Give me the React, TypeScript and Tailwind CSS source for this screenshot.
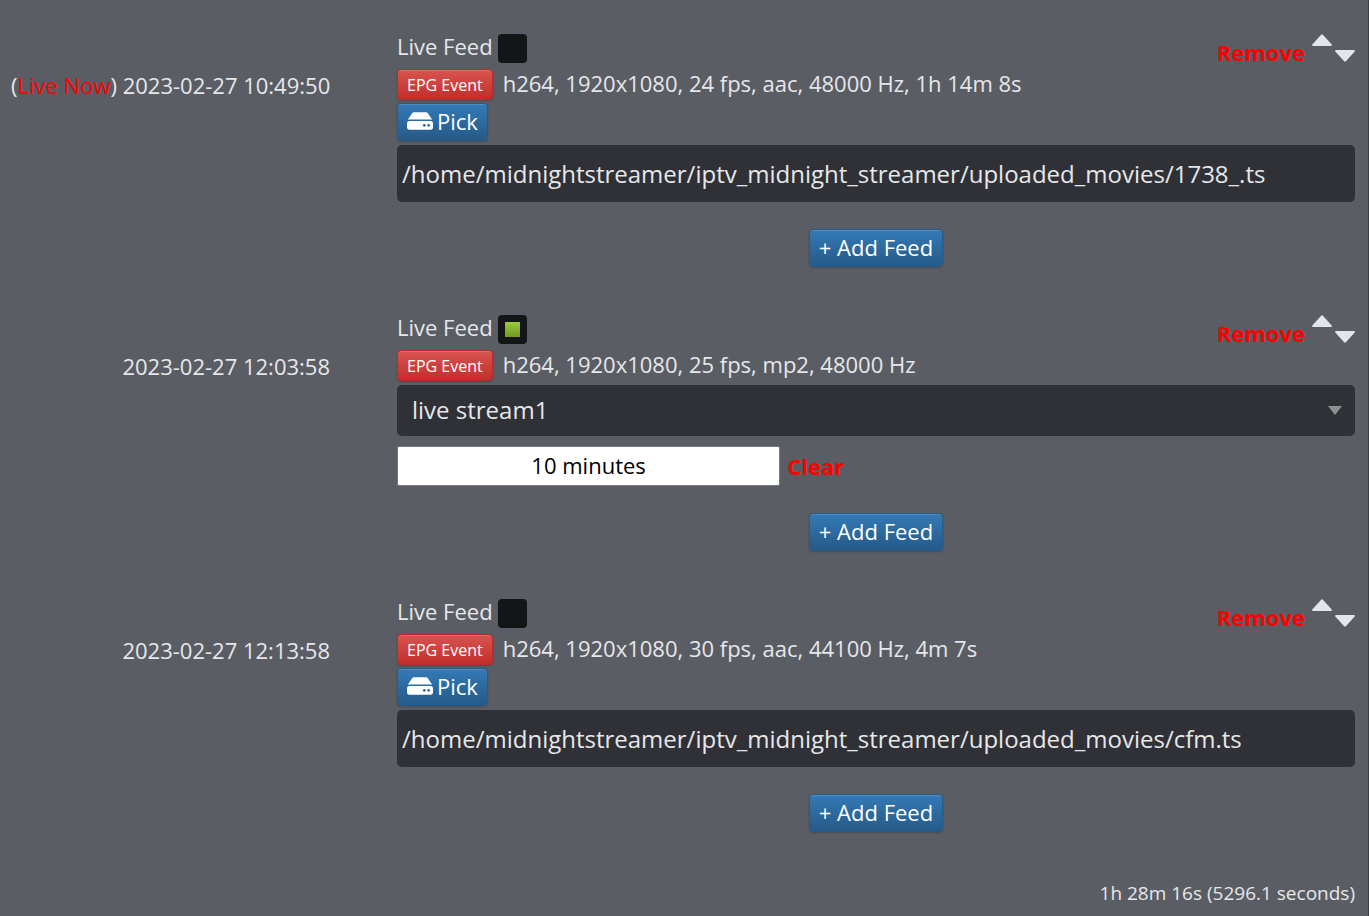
import { FaHdd } from "react-icons/fa";

type Feed = {
  id: string;
  startsAt: string;
  liveNow?: boolean;
  live: boolean;
  info: string;
  file?: string;
  stream?: string;
  duration?: string;
};

const feeds: Feed[] = [
  {
    id: "feed-1",
    startsAt: "2023-02-27 10:49:50",
    liveNow: true,
    live: false,
    info: "h264, 1920x1080, 24 fps, aac, 48000 Hz, 1h 14m 8s",
    file: "/home/midnightstreamer/iptv_midnight_streamer/uploaded_movies/1738_.ts",
  },
  {
    id: "feed-2",
    startsAt: "2023-02-27 12:03:58",
    live: true,
    info: "h264, 1920x1080, 25 fps, mp2, 48000 Hz",
    stream: "live stream1",
    duration: "10 minutes",
  },
  {
    id: "feed-3",
    startsAt: "2023-02-27 12:13:58",
    live: false,
    info: "h264, 1920x1080, 30 fps, aac, 44100 Hz, 4m 7s",
    file: "/home/midnightstreamer/iptv_midnight_streamer/uploaded_movies/cfm.ts",
  },
];

const blueButton =
  "flex items-center h-[38px] px-[9px] pb-[2px] rounded-sm border border-[#265a88] bg-linear-to-b from-[#337ab7] to-[#265a88] text-white leading-8 shadow-[inset_0_1px_0_rgba(255,255,255,0.15),0_1px_2px_rgba(0,0,0,0.2)]";

function LiveToggle({ id, checked }: { id: string; checked: boolean }) {
  return (
    <div className="flex items-start gap-[5px]">
      <label htmlFor={id} className="leading-6">
        Live Feed
      </label>
      <span className="relative flex">
        <input
          id={id}
          type="checkbox"
          defaultChecked={checked}
          className="peer appearance-none size-[29px] rounded-sm bg-[#141517]"
        />
        <span className="hidden peer-checked:block absolute top-[7px] left-[7px] size-[15px] bg-linear-to-b from-[#9ccb3b] to-[#719a22] pointer-events-none" />
      </span>
    </div>
  );
}

function MoveButtons() {
  return (
    <div className="flex self-stretch gap-[3px] text-[#e3e5ea]">
      <button type="button" aria-label="Move up" className="self-start">
        <svg viewBox="0 0 20 12" className="block w-5 h-3" fill="currentColor">
          <path d="M1.3 12 Q-.6 11.8 .5 10.2 L8.9 .9 Q10 -.2 11.1 .9 L19.5 10.2 Q20.6 11.8 18.7 12Z" />
        </svg>
      </button>
      <button type="button" aria-label="Move down" className="self-end">
        <svg viewBox="0 0 20 12" className="block w-5 h-3" fill="currentColor">
          <path d="M1.3 0 Q-.6 .2 .5 1.8 L8.9 11.1 Q10 12.2 11.1 11.1 L19.5 1.8 Q20.6 .2 18.7 0Z" />
        </svg>
      </button>
    </div>
  );
}

function FileSource({ feed }: { feed: Feed }) {
  return (
    <>
      <button type="button" className={`${blueButton} mt-[3px] gap-1`}>
        <FaHdd className="size-[26px]" />
        Pick
      </button>
      <input
        type="text"
        aria-label="File path"
        defaultValue={feed.file}
        className="block mt-1 w-full h-[57px] px-[5px] rounded-[5px] bg-[#303136] text-2xl"
      />
    </>
  );
}

function StreamSource({ feed }: { feed: Feed }) {
  return (
    <>
      <div className="relative mt-1">
        <select
          aria-label="Live stream"
          className="block appearance-none w-full h-[51px] px-[15px] pb-[2px] rounded-[5px] bg-[#303136] text-2xl"
        >
          <option>{feed.stream}</option>
        </select>
        <svg
          viewBox="0 0 14 9"
          className="absolute right-[13px] top-[21px] w-[14px] h-[9px] pointer-events-none"
          fill="#8f9092"
        >
          <path d="M0 0H14L7 9Z" />
        </svg>
      </div>
      <div className="flex items-center gap-[7px] mt-[10px]">
        <input
          type="text"
          aria-label="Duration"
          defaultValue={feed.duration}
          className="w-2/5 h-10 pb-[3px] rounded-xs border border-[#77797d] bg-white text-center text-black"
        />
        <button type="button" className="font-bold text-[#f00]">
          Clear
        </button>
      </div>
    </>
  );
}

function FeedRow({ feed }: { feed: Feed }) {
  return (
    <section className="grid grid-cols-[319px_1fr] gap-[67px]">
      <div className="pt-[35px] text-right leading-8 whitespace-nowrap">
        {feed.liveNow && (
          <>
            (<span className="text-[#f00]">Live Now</span>){" "}
          </>
        )}
        {feed.startsAt}
      </div>

      <div className="min-w-0">
        <div className="flex items-start justify-between">
          <LiveToggle id={feed.id} checked={feed.live} />
          <div className="flex items-center gap-[7px] h-7">
            <button type="button" className="mt-[7px] font-bold text-[#f00] leading-7">
              Remove
            </button>
            <MoveButtons />
          </div>
        </div>

        <div className="flex items-start gap-[10px] mt-[6px]">
          <button
            type="button"
            className="h-[31px] px-[9px] rounded-sm border border-[#b92c28] bg-linear-to-b from-[#d9534f] to-[#c12e2a] text-white text-base leading-7 shadow-[inset_0_1px_0_rgba(255,255,255,0.15),0_1px_2px_rgba(0,0,0,0.2)]"
          >
            EPG Event
          </button>
          <span className="leading-7">{feed.info}</span>
        </div>

        {feed.live ? <StreamSource feed={feed} /> : <FileSource feed={feed} />}

        <div className="flex justify-center mt-[27px]">
          <button type="button" className={blueButton}>
            + Add Feed
          </button>
        </div>
      </div>
    </section>
  );
}

export default function App() {
  return (
    <main className="min-h-screen pt-[34px] pr-[13px] pl-[11px] border-r border-[#3c3e43] bg-[#5b5d64] font-['Open_Sans',sans-serif] text-[22px] text-[#e6e7ea]">
      <div className="flex flex-col gap-12">
        {feeds.map((feed) => (
          <FeedRow key={feed.id} feed={feed} />
        ))}
      </div>
      <p className="mt-[47px] text-right text-[19px] leading-7">1h 28m 16s (5296.1 seconds)</p>
    </main>
  );
}
